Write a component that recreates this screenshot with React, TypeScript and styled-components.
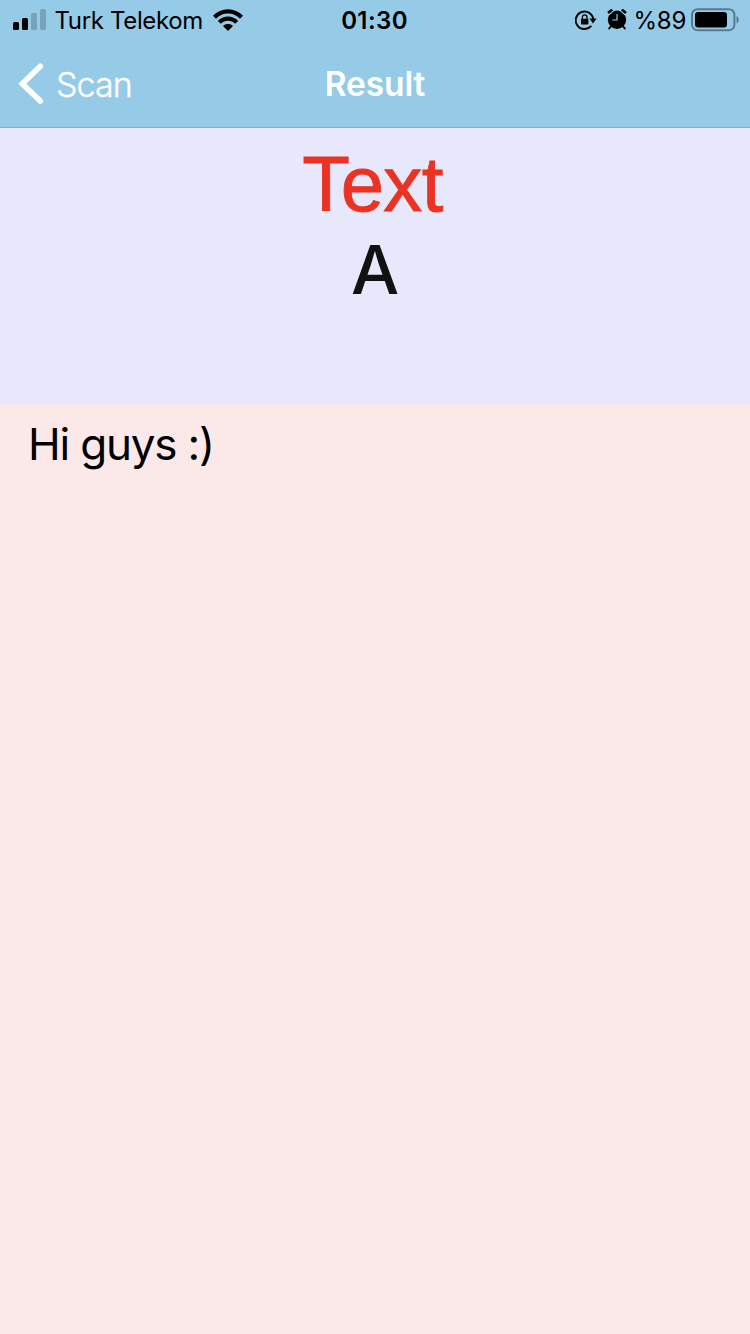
import React from "react";
import styled, { createGlobalStyle } from "styled-components";

const GlobalStyle = createGlobalStyle`
  * { box-sizing: border-box; }
  body { margin: 0; font-family: Inter, "Liberation Sans", sans-serif; }
`;

const Screen = styled.main`
  display: flex;
  flex-direction: column;
  width: 750px;
  height: 1334px;
  overflow: hidden;
`;

const Header = styled.header`
  height: 128px;
  background: #96cbe8;
  border-bottom: 1px solid #8fa9bd;
`;

const StatusBar = styled.div`
  display: grid;
  grid-template-columns: 1fr auto 1fr;
  height: 40px;
  padding: 0 11px 0 13px;
  color: #000;
`;

const StatusGroup = styled.div<{ $end?: boolean }>`
  display: flex;
  align-items: center;
  height: 39px;
  justify-content: ${(p) => (p.$end ? "flex-end" : "flex-start")};
  svg { flex: none; display: block; }
`;

const StatusText = styled.span<{ $weight?: number; $spacing?: number }>`
  font-size: 24px;
  line-height: 42px;
  font-weight: ${(p) => p.$weight ?? 400};
  letter-spacing: ${(p) => p.$spacing ?? 0}px;
  white-space: nowrap;
`;

const Clock = styled(StatusText)`
  padding-right: 3px;
`;

const Carrier = styled(StatusText)`
  padding-top: 3px;
  margin: 0 10px 0 7.5px;
`;

const Indicators = styled.div`
  display: flex;
  align-items: center;
  gap: 10px;
`;

const Percent = styled(StatusText)`
  padding-top: 3px;
  margin: 0 5px 0 7px;
`;

const NavBar = styled.nav`
  display: grid;
  grid-template-columns: 1fr auto 1fr;
  align-items: center;
  height: 87px;
  padding: 0 18px;
  color: #fff;
`;

const BackButton = styled.button`
  display: flex;
  align-items: center;
  gap: 11px;
  padding: 0;
  border: 0;
  background: none;
  color: inherit;
  font: 300 34px/44px Inter, sans-serif;
  letter-spacing: -0.9px;
  -webkit-text-stroke: 0.3px #fff;
  svg { display: block; }
`;

const BackLabel = styled.span`
  padding-top: 2px;
`;

const Title = styled.h1`
  margin: 0;
  font-size: 33.5px;
  line-height: 44px;
  font-weight: 600;
  letter-spacing: -0.1px;
`;

const Summary = styled.section`
  display: flex;
  flex-direction: column;
  align-items: center;
  height: 276px;
  padding-top: 10px;
  background: #e7e8fc;
`;

const Kind = styled.div`
  font: 400 78px/92px "Liberation Sans", sans-serif;
  letter-spacing: -0.7px;
  padding-right: 5px;
  color: #ec3323;
  -webkit-text-stroke: 0.9px #ec3323;
`;

const Format = styled.div`
  margin-top: -1px;
  font-size: 68px;
  line-height: 80px;
  font-weight: 500;
  color: #111;
`;

const Content = styled.section`
  flex: 1;
  padding: 13px 28px;
  background: #fbe9e9;
  color: #000;
  font-size: 44px;
  line-height: 54px;
  letter-spacing: -1.2px;
`;

const Signal = () => (
  <svg width="34" height="22" viewBox="0 0 34 22">
    <rect x="0" y="13" width="6" height="8" rx="1.5" />
    <rect x="9" y="9" width="6" height="12" rx="1.5" />
    <rect x="18" y="4" width="6" height="17" rx="1.5" opacity=".2" />
    <rect x="27" y="0" width="6" height="21" rx="1.5" opacity=".2" />
  </svg>
);

const Wifi = () => (
  <svg width="30" height="22" viewBox="0 0 30 22">
    <g fill="none" stroke="#000" strokeWidth="4.2">
      <path d="M1.5 8.2C9 .3 21 .3 28.5 8.2" />
      <path d="M6.3 13.4C11 8.3 19 8.3 23.7 13.4" />
    </g>
    <path d="M15 22l-5-5c2.7-2.6 7.3-2.6 10 0z" />
  </svg>
);

const RotationLock = () => (
  <svg width="22" height="20" viewBox="0 0 22 20">
    <path d="M16.3 15.9A8.8 8.8 0 1 1 18.3 9.5" fill="none" stroke="#000" strokeWidth="1.9" />
    <path d="M14.4 8.4h7.2L18 13.4z" />
    <rect x="6" y="8.8" width="7.4" height="5.8" rx=".8" />
    <path d="M7.4 9.4V7.1a2.3 2.3 0 0 1 4.6 0v2.3" fill="none" stroke="#000" strokeWidth="1.3" />
  </svg>
);

const Alarm = () => (
  <svg width="20" height="21" viewBox="0 0 20 21">
    <circle cx="10" cy="10.8" r="9.2" />
    <path d="M1.3 5l4.4-4M18.7 5l-4.4-4" stroke="#96cbe8" strokeWidth="3.2" />
    <path d="M1 4l4.2-3.4M19 4l-4.2-3.4" stroke="#000" strokeWidth="2.6" />
    <path d="M4.5 16.5l-2.3 3M15.5 16.5l2.3 3" stroke="#000" strokeWidth="2" strokeLinecap="round" />
    <path d="M10 5v6H5.2" fill="none" stroke="#96cbe8" strokeWidth="1.2" />
  </svg>
);

const Battery = () => (
  <svg width="48" height="24" viewBox="0 0 48 24">
    <rect x="1" y="1.2" width="42.4" height="21" rx="5.5" fill="none" stroke="#000" strokeOpacity=".4" strokeWidth="2" />
    <rect x="4" y="4" width="32" height="15.4" rx="3" />
    <path d="M45.6 8c2.6 1.2 2.6 6.2 0 7.4z" opacity=".45" />
  </svg>
);

const Chevron = () => (
  <svg width="27" height="42" viewBox="0 0 27 42">
    <path d="M22.3 3.3L4.3 20.7l18 17.4" fill="none" stroke="#fff" strokeWidth="5.6" strokeLinecap="round" />
  </svg>
);

export default function App() {
  return (
    <Screen>
      <GlobalStyle />
      <Header>
        <StatusBar>
          <StatusGroup>
            <Signal />
            <Carrier $spacing={-0.35}>Turk Telekom</Carrier>
            <Wifi />
          </StatusGroup>
          <Clock $weight={600} $spacing={0.4}>01:30</Clock>
          <StatusGroup $end>
            <Indicators>
              <RotationLock />
              <Alarm />
            </Indicators>
            <Percent $spacing={-0.3}>%89</Percent>
            <Battery />
          </StatusGroup>
        </StatusBar>
        <NavBar>
          <BackButton type="button">
            <Chevron />
            <BackLabel>Scan</BackLabel>
          </BackButton>
          <Title>Result</Title>
        </NavBar>
      </Header>
      <Summary>
        <Kind>Text</Kind>
        <Format>A</Format>
      </Summary>
      <Content>Hi guys :)</Content>
    </Screen>
  );
}
